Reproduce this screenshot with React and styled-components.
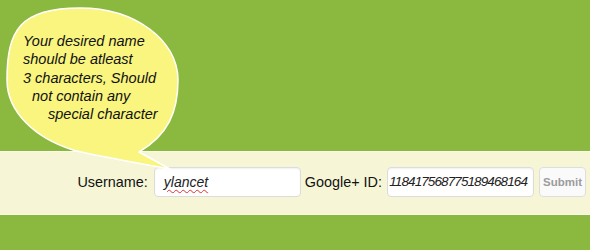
import React from "react";
import styled, { createGlobalStyle } from "styled-components";

const Global = createGlobalStyle`
  html, body { margin: 0; padding: 0; }
  body {
    background: #8bb940;
    font-family: "Liberation Sans", Arial, sans-serif;
  }
`;

const Page = styled.div`
  position: relative;
  width: 590px;
  height: 250px;
  background: #8bb940;
  overflow: hidden;
`;

const Hero = styled.div`
  height: 151px;
`;

const Band = styled.div`
  height: 59px;
  background: #f6f6d7;
  border-top: 1px solid #fbfbea;
  border-bottom: 1px solid #fbfbea;
  display: flex;
  align-items: center;
  justify-content: flex-end;
  padding: 0 4px 3px 0;
  box-sizing: content-box;
`;

const Label = styled.span`
  font-size: 14.4px;
  color: #111;
  margin: 0 ${(p) => p.$gap}px 0 ${(p) => p.$lead}px;
  white-space: nowrap;
`;

const Field = styled.div`
  width: 147px;
  height: 30px;
  box-sizing: border-box;
  background: #fff;
  border: 1px solid #dcdcdc;
  border-radius: 4px;
  box-shadow: inset 0 1px 2px rgba(0, 0, 0, 0.06);
  display: flex;
  align-items: center;
  justify-content: ${(p) => (p.$end ? "flex-end" : "flex-start")};
  padding: ${(p) => (p.$end ? "0 6px 0 5px" : "0 8px")};
  overflow: hidden;
  font-style: italic;
  font-size: ${(p) => (p.$end ? "13.5px" : "14px")};
  letter-spacing: ${(p) => (p.$end ? "-0.9px" : "0")};
  color: #222;
  white-space: nowrap;
`;

const Misspelled = styled.span`
  text-decoration: underline wavy #e03030;
  text-decoration-thickness: 1px;
  text-underline-offset: 2px;
  padding-left: 1px;
`;

const Digits = styled.span`
  flex-shrink: 0;
`;

const Submit = styled.button`
  width: 47px;
  height: 30px;
  margin-left: 5px;
  box-sizing: border-box;
  background: #fafafa;
  border: 1px solid #dedede;
  border-radius: 4px;
  font-family: "Liberation Sans", Arial, sans-serif;
  font-weight: bold;
  font-size: 11.5px;
  color: #9c9c9c;
  padding: 0;
`;

const Bubble = styled.div`
  position: absolute;
  left: 0;
  top: 0;
  width: 185px;
  height: 175px;
  z-index: 2;
`;

const BubbleShape = styled.svg`
  position: absolute;
  left: 0;
  top: 0;
`;

const BubbleText = styled.div`
  position: relative;
  padding: 32px 0 0 23px;
  font-style: italic;
  font-size: 14.5px;
  line-height: 18.3px;
  color: #111;
`;

const Line = styled.div`
  padding-left: ${(p) => p.$indent || 0}px;
  white-space: nowrap;
`;

export default function App() {
  return (
    <>
      <Global />
      <Page>
        <Bubble>
          <BubbleShape width="185" height="175" viewBox="0 0 185 175">
            <path
              d="M 80 8
                 C 135 8, 178 40, 178 80
                 C 178 112, 168 135, 139 152
                 L 170 169
                 C 140 163, 100 157, 73 150
                 C 35 138, 7 112, 7 80
                 C 7 30, 20 8, 80 8 Z"
              fill="#f9f57f"
              stroke="#ffffff"
              strokeWidth="1.5"
              strokeLinejoin="round"
            />
          </BubbleShape>
          <BubbleText>
            <Line>Your desired name</Line>
            <Line>should be atleast</Line>
            <Line>3 characters, Should</Line>
            <Line $indent={9}>not contain any</Line>
            <Line $indent={25}>special character</Line>
          </BubbleText>
        </Bubble>
        <Hero />
        <Band>
          <Label $lead={0} $gap={6}>Username:</Label>
          <Field>
            <Misspelled>ylancet</Misspelled>
          </Field>
          <Label $lead={4} $gap={5}>Google+ ID:</Label>
          <Field $end>
            <Digits>118417568775189468164</Digits>
          </Field>
          <Submit type="button">Submit</Submit>
        </Band>
      </Page>
    </>
  );
}
